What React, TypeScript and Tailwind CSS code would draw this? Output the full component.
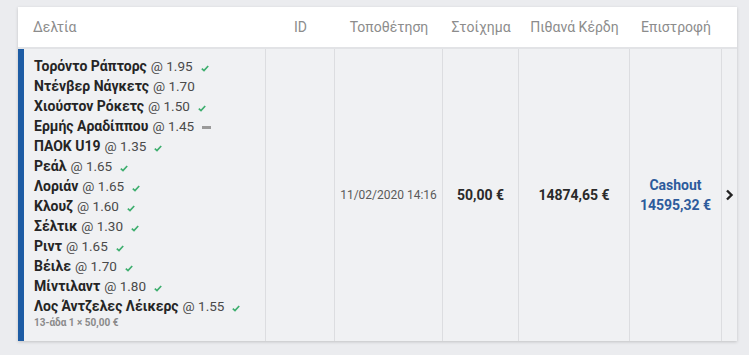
import React from "react";

type Sel = { team: string; odds: string; status: "won" | "pending" | "none" };

const sels: Sel[] = [
  { team: "Τορόντο Ράπτορς", odds: "1.95", status: "won" },
  { team: "Ντένβερ Νάγκετς", odds: "1.70", status: "none" },
  { team: "Χιούστον Ρόκετς", odds: "1.50", status: "won" },
  { team: "Ερμής Αραδίππου", odds: "1.45", status: "pending" },
  { team: "ΠΑΟΚ U19", odds: "1.35", status: "won" },
  { team: "Ρεάλ", odds: "1.65", status: "won" },
  { team: "Λοριάν", odds: "1.65", status: "won" },
  { team: "Κλουζ", odds: "1.60", status: "won" },
  { team: "Σέλτικ", odds: "1.30", status: "won" },
  { team: "Ριντ", odds: "1.65", status: "won" },
  { team: "Βέιλε", odds: "1.70", status: "won" },
  { team: "Μίντιλαντ", odds: "1.80", status: "won" },
  { team: "Λος Άντζελες Λέικερς", odds: "1.55", status: "won" },
];

function Check() {
  return (
    <svg width="8" height="7" viewBox="0 0 8 7" className="ml-[8px] mt-[5px]">
      <path d="M0.8 3.6 L3 5.6 L7.2 1" fill="none" stroke="#3dae6e" strokeWidth="1.7" />
    </svg>
  );
}

function Dash() {
  return <span className="ml-[8px] mt-[3px] inline-block h-[3px] w-[9px] bg-[#9a9a9a]" />;
}

export default function App() {
  return (
    <div
      className="min-h-[355px] w-[749px] bg-[#ebecef] pl-[18px] pt-[7px]"
      style={{ fontFamily: "Roboto, 'Noto Sans', sans-serif" }}
    >
      <div className="w-[719px] bg-white shadow-[0_1px_3px_rgba(0,0,0,0.18)]">
        <div className="grid h-[42px] grid-cols-[248px_69px_108px_76px_111px_92px_15px] items-center border-b-2 border-[#e2e3e6] text-[14px] text-[#8c8c8c]">
          <div className="pl-[15px]">Δελτία</div>
          <div className="text-center">ID</div>
          <div className="text-center">Τοποθέτηση</div>
          <div className="text-center">Στοίχημα</div>
          <div className="text-center">Πιθανά Κέρδη</div>
          <div className="text-center">Επιστροφή</div>
          <div />
        </div>
        <div className="grid grid-cols-[248px_69px_108px_76px_111px_92px_15px] bg-[#f0f1f3]">
          <div className="flex border-r border-[#dcdde0]">
            <div className="w-[6px] bg-[#1d5ca4]" />
            <div className="flex flex-col pb-[11px] pl-[10px] pt-[7px]">
              {sels.map((s) => (
                <div key={s.team} className="flex h-[20px] items-center leading-[20px]">
                  <span className="text-[14px] font-bold text-[#252525]">{s.team}</span>
                  <span className="ml-[4px] text-[13.5px] text-[#4a4a4a]">@ {s.odds}</span>
                  {s.status === "won" && <Check />}
                  {s.status === "pending" && <Dash />}
                </div>
              ))}
              <div className="h-[14px] text-[10px] font-bold leading-[14px] text-[#8a8a8a]">
                13-άδα 1 × 50,00 €
              </div>
            </div>
          </div>
          <div className="border-r border-[#dcdde0]" />
          <div className="flex items-center justify-center border-r border-[#dcdde0] text-[12px] text-[#5a5a5a]">
            11/02/2020 14:16
          </div>
          <div className="flex items-center justify-center border-r border-[#dcdde0] text-[14px] font-bold text-[#2a2a2a]">
            50,00 €
          </div>
          <div className="flex items-center justify-center border-r border-[#dcdde0] text-[14px] font-bold text-[#2a2a2a]">
            14874,65 €
          </div>
          <div className="flex flex-col items-center justify-center border-r border-[#dcdde0] text-[14px] font-bold leading-[20px] text-[#2d5b9c]">
            <span>Cashout</span>
            <span>14595,32 €</span>
          </div>
          <div className="flex items-center justify-center">
            <svg width="9" height="12" viewBox="0 0 9 12">
              <path d="M2 1.5 L6.5 6 L2 10.5" fill="none" stroke="#222" strokeWidth="2.4" />
            </svg>
          </div>
        </div>
      </div>
    </div>
  );
}
